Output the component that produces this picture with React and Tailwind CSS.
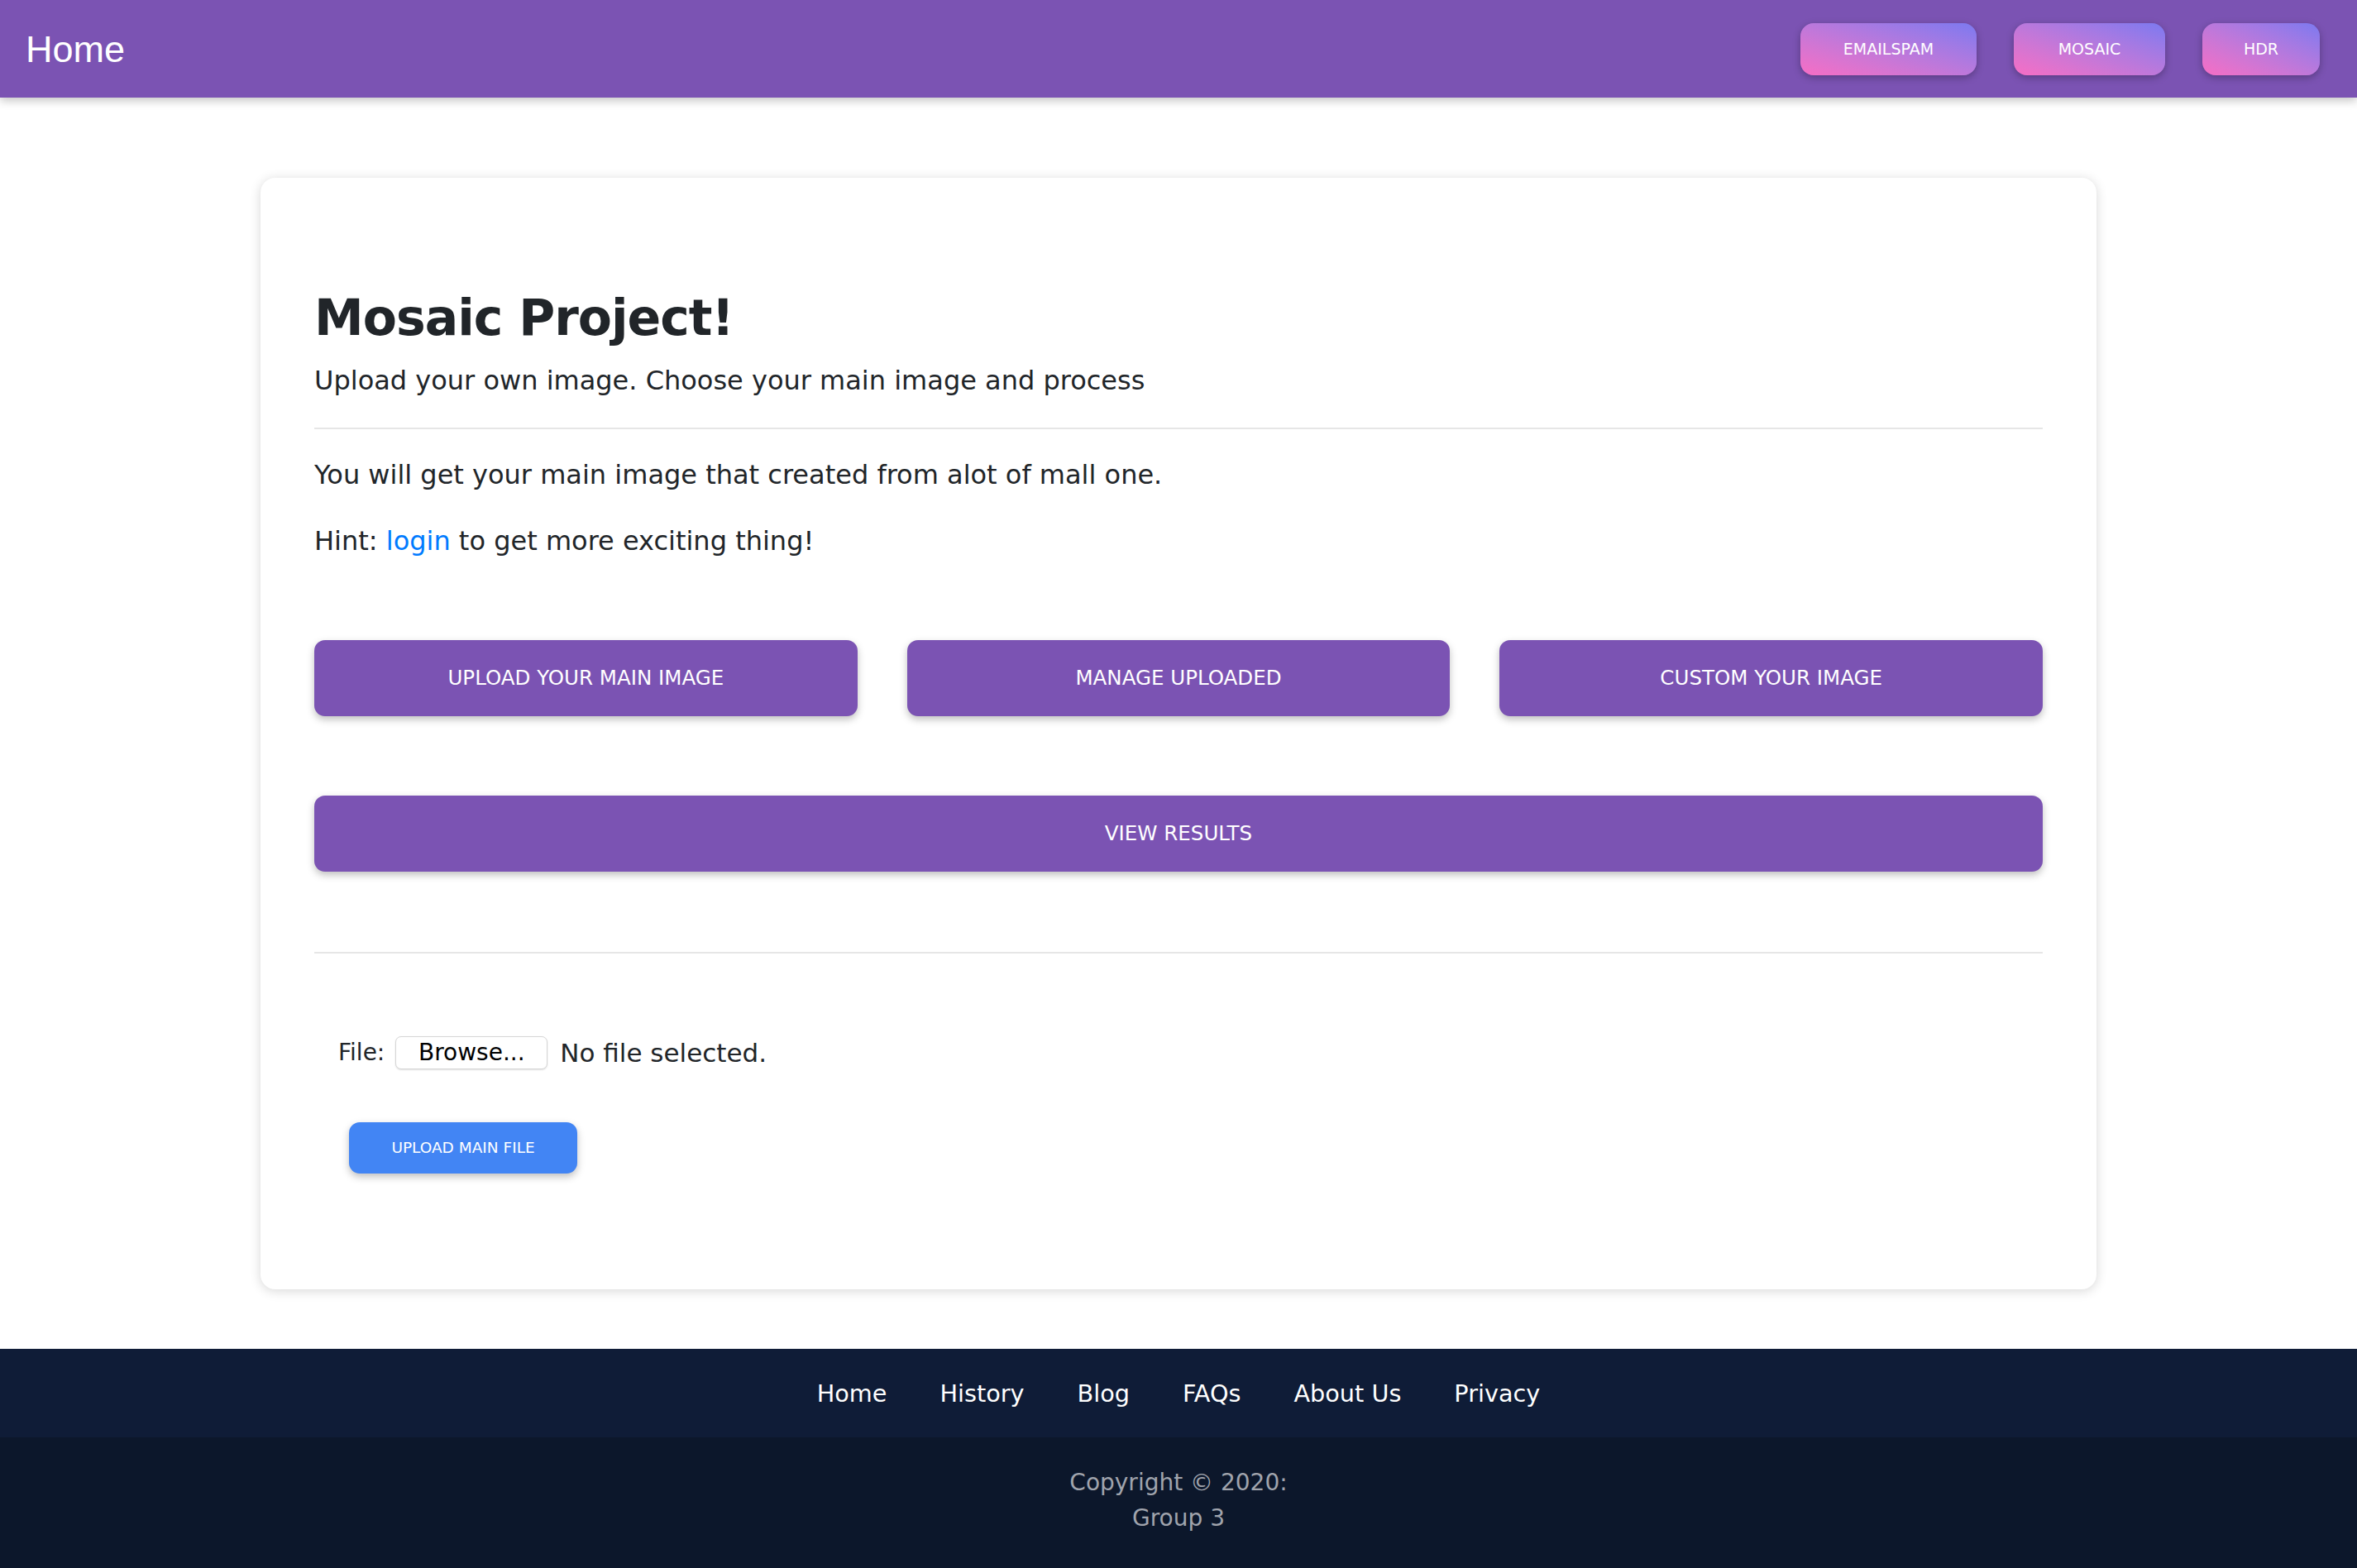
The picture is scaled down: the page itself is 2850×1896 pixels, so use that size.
import React from 'react';

const navButtons = [
  { label: 'EMAILSPAM', width: 'w-[213px]' },
  { label: 'MOSAIC', width: 'w-[183px]' },
  { label: 'HDR', width: 'w-[142px]' },
];

const footerLinks = ['Home', 'History', 'Blog', 'FAQs', 'About Us', 'Privacy'];

const ActionButton = ({ children, className = '' }) => (
  <button
    className={`h-[92px] rounded-[13px] bg-[#7b53b3] text-white text-[24.5px] font-medium leading-none shadow-[0_4px_10px_rgba(0,0,0,0.25)] ${className}`}
  >
    {children}
  </button>
);

const App = () => {
  return (
    <div className="min-h-screen flex flex-col bg-white text-[#212529] font-['DejaVu_Sans',sans-serif]">
      {/* Navbar */}
      <header className="relative z-10 h-[118px] shrink-0 bg-[#7b53b3] flex items-center justify-between pl-[31px] pr-[45px] shadow-[0_4px_10px_rgba(0,0,0,0.22)]">
        <span className="text-white text-[45px] leading-none font-['Liberation_Sans',Arial,sans-serif]">Home</span>
        <div className="flex items-center gap-[45px]">
          {navButtons.map((b) => (
            <button
              key={b.label}
              className={`${b.width} h-[63px] rounded-2xl bg-linear-to-tr from-[#f76dc4] to-[#7b79f0] text-white text-[19px] font-medium shadow-[0_3px_10px_rgba(0,0,0,0.28)]`}
            >
              {b.label}
            </button>
          ))}
        </div>
      </header>

      {/* Main */}
      <main className="flex-1 pt-[97px] pb-[72px]">
        <div className="w-[2220px] mx-auto bg-white rounded-[18px] shadow-[0_2px_14px_rgba(0,0,0,0.16)] pt-[134px] pb-[140px] pl-[65px] pr-[65px]">
          <h1 className="text-[60px] leading-[70px] font-bold tracking-[-1px]">Mosaic Project!</h1>
          <p className="mt-[21px] text-[32px] leading-[40px]">Upload your own image. Choose your main image and process</p>
          <hr className="mt-[37px] border-0 h-[2px] bg-[#e6e6e6]" />
          <p className="mt-[35px] text-[32px] leading-[40px]">You will get your main image that created from alot of mall one.</p>
          <p className="mt-[40px] text-[32px] leading-[40px]">
            Hint: <a className="text-[#007bff]">login</a> to get more exciting thing!
          </p>

          <div className="mt-[100px] grid grid-cols-3 gap-[60px]">
            <ActionButton>UPLOAD YOUR MAIN IMAGE</ActionButton>
            <ActionButton>MANAGE UPLOADED</ActionButton>
            <ActionButton>CUSTOM YOUR IMAGE</ActionButton>
          </div>
          <ActionButton className="mt-[96px] w-full">VIEW RESULTS</ActionButton>

          <hr className="mt-[97px] border-0 h-[2px] bg-[#e6e6e6]" />

          {/* File upload */}
          <div className="mt-[100px] ml-[29px] h-[40px] flex items-center text-[28px] leading-[40px]">
            <span>File:</span>
            <span className="ml-[13px] w-[184px] h-[40px] flex items-center justify-center rounded-[7px] border border-[#d6d6d6] bg-white shadow-[0_1px_2px_rgba(0,0,0,0.12)] text-black">
              Browse...
            </span>
            <span className="ml-[15px] text-[31px]">No file selected.</span>
          </div>
          <button className="mt-[64px] ml-[42px] w-[276px] h-[62px] rounded-[13px] bg-[#4285f4] text-white text-[18.5px] font-medium shadow-[0_4px_10px_rgba(0,0,0,0.25)]">
            UPLOAD MAIN FILE
          </button>
        </div>
      </main>

      {/* Footer */}
      <footer className="shrink-0">
        <div className="h-[107px] bg-[#0f1c37] flex items-center justify-center gap-[64px]">
          {footerLinks.map((l) => (
            <a key={l} className="text-white text-[28.7px] leading-[36px] font-medium">{l}</a>
          ))}
        </div>
        <div className="h-[158px] bg-[#0c172b] pt-[33px] text-center text-[#a0a4ad] text-[28px] leading-[43px]">
          <div>Copyright © 2020:</div>
          <div>Group 3</div>
        </div>
      </footer>
    </div>
  );
};

export default App;
